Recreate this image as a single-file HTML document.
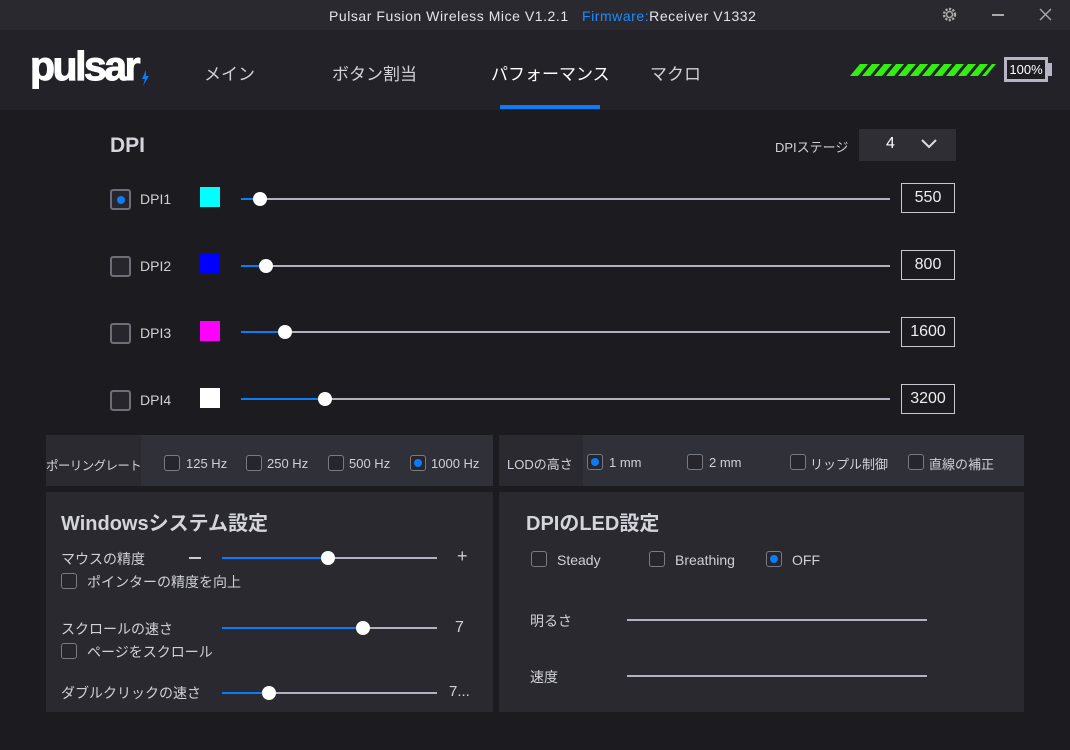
<!DOCTYPE html>
<html><head><meta charset="utf-8"><style>
*{margin:0;padding:0;box-sizing:border-box}
body{width:1070px;height:750px;background:#1c1c20;font-family:"Liberation Sans","Noto Sans CJK JP",sans-serif;color:#d8d8de;position:relative;overflow:hidden}
.a{position:absolute;white-space:nowrap}
.cb{position:absolute;width:16px;height:16px;border:1px solid #7a7a84;border-radius:3px;background:#26262c}
.cb.big{width:21px;height:21px;border-width:2px;border-color:#6e6e78}
.cb.on::after{content:"";position:absolute;left:50%;top:50%;width:8px;height:8px;margin:-4px 0 0 -4px;border-radius:50%;background:#0a7cf5}
.trk{position:absolute;height:2px;background:#b4b0c0}
.fill{position:absolute;height:2px;background:#0a7cf5}
.knob{position:absolute;width:14px;height:14px;border-radius:50%;background:#fff;margin:-7px 0 0 -7px}
.val{position:absolute;width:54px;height:30px;border:1px solid #c8c8d0;background:#1c1c20;font-size:16px;text-align:center;line-height:28px;color:#eee}
.sq{position:absolute;width:20px;height:20px}
.t{font-size:14px;color:#d0d0d8}
.tab{font-size:17px;color:#d0d0d6;top:60px}
</style></head><body>
<div class="a" style="left:0;top:0;width:1070px;height:30px;background:#29292f"></div>
<div class="a" style="left:329px;top:8px;font-size:14px;letter-spacing:0.55px;color:#e4e4ea">Pulsar Fusion Wireless Mice V1.2.1 &nbsp;&nbsp;<span style="color:#1a8cff">Firmware:</span>Receiver V1332</div>
<svg class="a" style="left:941px;top:6px" width="17" height="17" viewBox="0 0 17 17"><circle cx="8.5" cy="8.5" r="5.5" fill="none" stroke="#aaa" stroke-width="2.4" stroke-dasharray="2.2 1.4"/><circle cx="8.5" cy="8.5" r="3" fill="none" stroke="#aaa" stroke-width="1.5"/></svg>
<div class="a" style="left:992px;top:14px;width:12px;height:1.5px;background:#aaa"></div>
<svg class="a" style="left:1039px;top:8px" width="13" height="13"><path d="M1 1L12 12M12 1L1 12" stroke="#aaa" stroke-width="1.4"/></svg>

<div class="a" style="left:0;top:30px;width:1070px;height:80px;background:#222228"></div>
<div class="a" style="left:30px;top:43px;font-size:41px;font-weight:bold;color:#fff;letter-spacing:-2.5px;-webkit-text-stroke:1px #fff">pulsar</div>
<svg class="a" style="left:140px;top:70px" width="10" height="16"><path d="M6 0L2 9 5 9 3 16 9 6 6 6z" fill="#0a7cf5"/></svg>
<div class="a tab" style="left:204px">メイン</div>
<div class="a tab" style="left:332px">ボタン割当</div>
<div class="a tab" style="left:491px;color:#fff">パフォーマンス</div>
<div class="a tab" style="left:650px">マクロ</div>
<div class="a" style="left:500px;top:105px;width:100px;height:4px;background:#0a7cf5"></div>
<svg class="a" style="left:850px;top:62px" width="150" height="16"><g fill="#33ee11">
<path d="M0 14L10 2 18 2 8 14z"/><path d="M12 14L22 2 30 2 20 14z"/><path d="M24 14L34 2 42 2 32 14z"/><path d="M36 14L46 2 54 2 44 14z"/><path d="M48 14L58 2 66 2 56 14z"/><path d="M60 14L70 2 78 2 68 14z"/><path d="M72 14L82 2 90 2 80 14z"/><path d="M84 14L94 2 102 2 92 14z"/><path d="M96 14L106 2 114 2 104 14z"/><path d="M108 14L118 2 126 2 116 14z"/><path d="M120 14L130 2 138 2 128 14z"/><path d="M132 14L142 2 146 2 136 14z"/></g></svg>
<div class="a" style="left:1004px;top:57px;width:44px;height:25px;border:3px solid #b8b4c6;background:#1e1e22;font-size:13px;color:#fff;text-align:center;line-height:19px">100%</div>
<div class="a" style="left:1048px;top:63px;width:4px;height:13px;background:#b8b4c6"></div>

<div class="a" style="left:110px;top:134px;font-size:21px;font-weight:bold;color:#d4d4dc">DPI</div>
<div class="a t" style="left:775px;top:137px;font-size:13px">DPIステージ</div>
<div class="a" style="left:859px;top:129px;width:97px;height:32px;background:#2e2e34"></div>
<div class="a" style="left:886px;top:135px;font-size:16px;color:#fff">4</div>
<svg class="a" style="left:921px;top:139px" width="16" height="10"><path d="M1 1L8 8 15 1" fill="none" stroke="#ddd" stroke-width="2"/></svg>

<div class="cb big on" style="left:110px;top:189px"></div><div class="a t" style="left:140px;top:191px">DPI1</div><div class="sq" style="left:200px;top:187px;background:#00ffff"></div>
<div class="trk" style="left:241px;top:198px;width:649px"></div><div class="fill" style="left:241px;top:198px;width:19px"></div><div class="knob" style="left:260px;top:199px"></div><div class="val" style="left:901px;top:183px">550</div>

<div class="cb big" style="left:110px;top:256px"></div><div class="a t" style="left:140px;top:258px">DPI2</div><div class="sq" style="left:200px;top:254px;background:#0000ff"></div>
<div class="trk" style="left:241px;top:265px;width:649px"></div><div class="fill" style="left:241px;top:265px;width:25px"></div><div class="knob" style="left:266px;top:266px"></div><div class="val" style="left:901px;top:250px">800</div>

<div class="cb big" style="left:110px;top:323px"></div><div class="a t" style="left:140px;top:325px">DPI3</div><div class="sq" style="left:200px;top:321px;background:#ff00ff"></div>
<div class="trk" style="left:241px;top:331px;width:649px"></div><div class="fill" style="left:241px;top:331px;width:44px"></div><div class="knob" style="left:285px;top:332px"></div><div class="val" style="left:901px;top:317px">1600</div>

<div class="cb big" style="left:110px;top:390px"></div><div class="a t" style="left:140px;top:392px">DPI4</div><div class="sq" style="left:200px;top:388px;background:#ffffff"></div>
<div class="trk" style="left:241px;top:398px;width:649px"></div><div class="fill" style="left:241px;top:398px;width:84px"></div><div class="knob" style="left:325px;top:399px"></div><div class="val" style="left:901px;top:384px">3200</div>

<div class="a" style="left:46px;top:435px;width:447px;height:51px;background:#303038"></div>
<div class="a" style="left:46px;top:435px;width:95px;height:51px;background:#2a2a30"></div>
<div class="a t" style="left:46px;top:455px;font-size:12.5px;letter-spacing:-0.6px">ポーリングレート</div>
<div class="cb" style="left:164px;top:455px"></div><div class="a t" style="left:186px;top:456px;font-size:13px">125 Hz</div>
<div class="cb" style="left:246px;top:455px"></div><div class="a t" style="left:267px;top:456px;font-size:13px">250 Hz</div>
<div class="cb" style="left:328px;top:455px"></div><div class="a t" style="left:349px;top:456px;font-size:13px">500 Hz</div>
<div class="cb on" style="left:410px;top:455px"></div><div class="a t" style="left:431px;top:456px;font-size:13px">1000 Hz</div>

<div class="a" style="left:499px;top:435px;width:525px;height:51px;background:#303038"></div>
<div class="a" style="left:499px;top:435px;width:84px;height:51px;background:#2a2a30"></div>
<div class="a t" style="left:507px;top:454px;font-size:13px">LODの高さ</div>
<div class="cb on" style="left:587px;top:454px"></div><div class="a t" style="left:609px;top:455px;font-size:13px">1 mm</div>
<div class="cb" style="left:687px;top:454px"></div><div class="a t" style="left:709px;top:455px;font-size:13px">2 mm</div>
<div class="cb" style="left:790px;top:454px"></div><div class="a t" style="left:810px;top:454px;font-size:13px">リップル制御</div>
<div class="cb" style="left:908px;top:454px"></div><div class="a t" style="left:929px;top:454px;font-size:13px">直線の補正</div>

<div class="a" style="left:46px;top:492px;width:447px;height:220px;background:#29292f"></div>
<div class="a" style="left:61px;top:507px;font-size:20px;font-weight:bold;color:#d4d4dc">Windowsシステム設定</div>
<div class="a t" style="left:61px;top:549px">マウスの精度</div>
<div class="a" style="left:189px;top:557px;width:12px;height:1.5px;background:#ccc"></div>
<div class="trk" style="left:222px;top:557px;width:215px"></div><div class="fill" style="left:222px;top:557px;width:106px"></div><div class="knob" style="left:328px;top:558px"></div>
<div class="a" style="left:457px;top:546px;font-size:18px;color:#ccc">+</div>
<div class="cb" style="left:61px;top:573px"></div><div class="a t" style="left:87px;top:572px">ポインターの精度を向上</div>
<div class="a t" style="left:61px;top:619px">スクロールの速さ</div>
<div class="trk" style="left:222px;top:627px;width:215px"></div><div class="fill" style="left:222px;top:627px;width:141px"></div><div class="knob" style="left:363px;top:628px"></div>
<div class="a t" style="left:455px;top:619px;font-size:16px">7</div>
<div class="cb" style="left:61px;top:643px"></div><div class="a t" style="left:87px;top:642px">ページをスクロール</div>
<div class="a t" style="left:61px;top:683px">ダブルクリックの速さ</div>
<div class="trk" style="left:222px;top:692px;width:215px"></div><div class="fill" style="left:222px;top:692px;width:47px"></div><div class="knob" style="left:269px;top:693px"></div>
<div class="a t" style="left:449px;top:683px;font-size:15px">7...</div>

<div class="a" style="left:499px;top:492px;width:525px;height:220px;background:#29292f"></div>
<div class="a" style="left:526px;top:507px;font-size:20px;font-weight:bold;color:#d4d4dc">DPIのLED設定</div>
<div class="cb" style="left:531px;top:551px"></div><div class="a t" style="left:557px;top:552px">Steady</div>
<div class="cb" style="left:649px;top:551px"></div><div class="a t" style="left:675px;top:552px">Breathing</div>
<div class="cb on" style="left:766px;top:551px"></div><div class="a t" style="left:792px;top:552px">OFF</div>
<div class="a t" style="left:530px;top:611px">明るさ</div>
<div class="trk" style="left:627px;top:619px;width:300px"></div>
<div class="a t" style="left:530px;top:667px">速度</div>
<div class="trk" style="left:627px;top:675px;width:300px"></div>
</body></html>
